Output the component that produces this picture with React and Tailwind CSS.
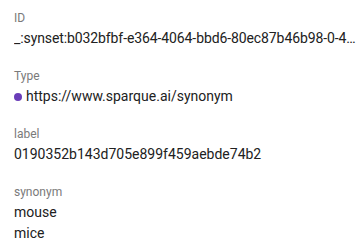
export default function App() {
  const fields = [
    { label: 'ID', values: ['_:synset:b032bfbf-e364-4064-bbd6-80ec87b46b98-0-4-synonym'], truncate: true },
    { label: 'Type', values: ['https://www.sparque.ai/synonym'], dot: true },
    { label: 'label', values: ['0190352b143d705e899f459aebde74b2'] },
    { label: 'synonym', values: ['mouse', 'mice'] },
  ];

  return (
    <div className="w-[360px] h-[248px] bg-white pl-[14px] pt-[8px] font-['Roboto',sans-serif] overflow-hidden">
      <div className="flex flex-col gap-[17px]">
        {fields.map((f) => (
          <div key={f.label} className="flex flex-col">
            <div className="text-[12px] leading-[20px] text-[#7a7a7a]">{f.label}</div>
            {f.values.map((v) => (
              <div
                key={v}
                className="flex items-center gap-[4px] text-[14px] leading-[21px] text-[#212121] whitespace-nowrap overflow-hidden"
              >
                {f.dot && <span className="inline-block w-[8px] h-[8px] rounded-full bg-[#6a3db8] shrink-0" />}
                <span className={f.truncate ? 'overflow-hidden text-ellipsis tracking-[-0.1px] pr-[3px]' : ''}>{v}</span>
              </div>
            ))}
          </div>
        ))}
      </div>
    </div>
  );
}
